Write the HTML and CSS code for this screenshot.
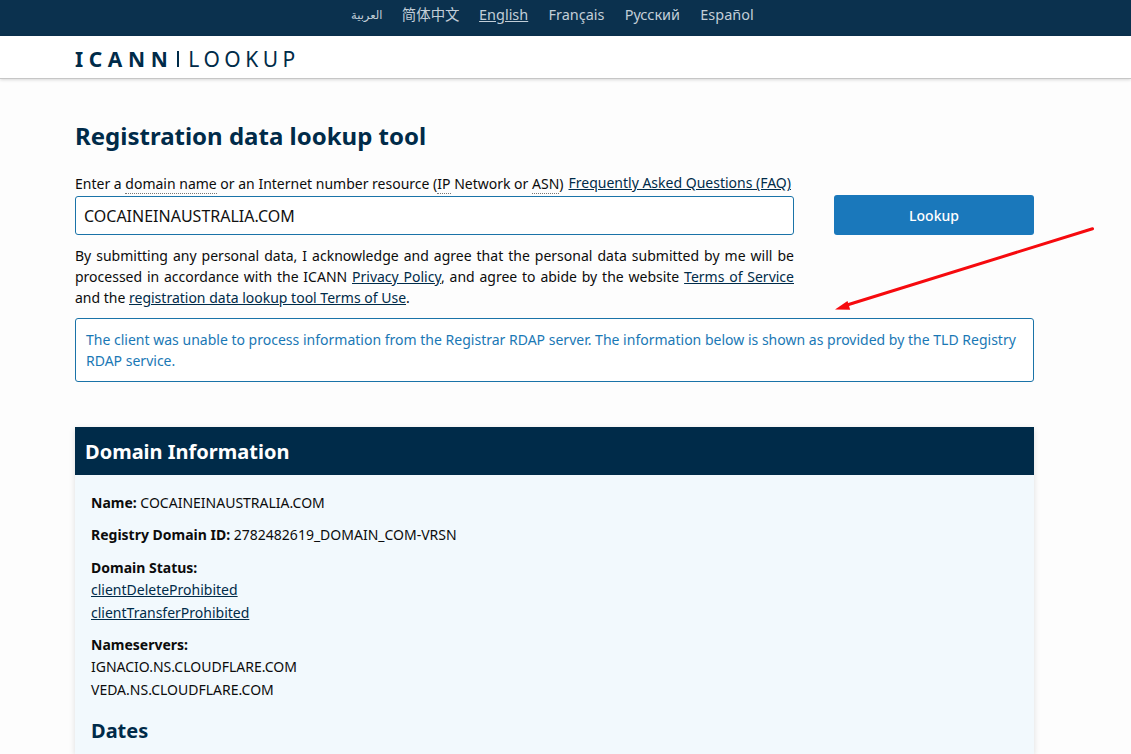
FILE: index.html
```html
<!DOCTYPE html>
<html lang="en">
<head>
    <meta charset="UTF-8">
    <meta name="viewport" content="width=device-width, initial-scale=1.0">
    <title>ICANN Lookup</title>
    <link rel="stylesheet" href="styles.css">
</head>
<body>
    <!-- Languages -->
    <nav class="languages">
        <a href="#" class="arabic" lang="ar">العربية</a>
        <a href="#" class="chinese" lang="zh">简体中文</a>
        <a href="#" class="active">English</a>
        <a href="#">Français</a>
        <a href="#">Русский</a>
        <a href="#">Español</a>
    </nav>

    <!-- Header -->
    <header>
        <a href="#" class="logo"><span class="logo-icann">ICANN</span><span class="logo-bar"></span><span class="logo-lookup">LOOKUP</span></a>
    </header>

    <!-- Main Content -->
    <main>
        <h1>Registration data lookup tool</h1>

        <form class="lookup-form">
            <div class="lookup-fields">
                <div class="field-label">
                    <label for="domain">Enter a <span class="hint">domain name</span> or an Internet number resource (<span class="hint">IP</span> Network or <span class="hint">ASN</span>)</label>
                    <a href="#" class="faq">Frequently Asked Questions (FAQ)</a>
                </div>
                <input type="text" id="domain" value="COCAINEINAUSTRALIA.COM">
                <p class="terms">By submitting any personal data, I acknowledge and agree that the personal data submitted by me will be processed in accordance with the ICANN <a href="#">Privacy Policy</a>, and agree to abide by the website <a href="#">Terms of Service</a> and the <a href="#">registration data lookup tool Terms of Use</a>.</p>
            </div>
            <button type="button" class="lookup-btn">Lookup</button>
        </form>

        <div class="notice">The client was unable to process information from the Registrar RDAP server. The information below is shown as provided by the TLD Registry RDAP service.</div>

        <!-- Results -->
        <section class="panel">
            <h2>Domain Information</h2>
            <div class="panel-body">
                <div class="item"><strong>Name:</strong> COCAINEINAUSTRALIA.COM</div>
                <div class="item"><strong>Registry Domain ID:</strong> 2782482619_DOMAIN_COM-VRSN</div>
                <div class="item">
                    <strong>Domain Status:</strong>
                    <ul>
                        <li><a href="#">clientDeleteProhibited</a></li>
                        <li><a href="#">clientTransferProhibited</a></li>
                    </ul>
                </div>
                <div class="item">
                    <strong>Nameservers:</strong>
                    <ul>
                        <li>IGNACIO.NS.CLOUDFLARE.COM</li>
                        <li>VEDA.NS.CLOUDFLARE.COM</li>
                    </ul>
                </div>
                <h3>Dates</h3>
            </div>
        </section>
    </main>

    <!-- Arrow pointing at the notice -->
    <svg class="arrow" width="262" height="88" viewBox="0 0 262 88">
        <line x1="12" y1="80" x2="257.500" y2="3.800" stroke="#f60a0e" stroke-width="3" stroke-linecap="round"/>
        <polygon points="0,84.500 12.500,76 15.200,84.800" fill="#f60a0e"/>
    </svg>
</body>
</html>
```

FILE: styles.css
```css
/* General Styles */
* {
    box-sizing: border-box;
}

body {
    margin: 0;
    height: 754px;
    overflow: hidden;
    font-family: 'Noto Sans', sans-serif;
    font-size: 14px;
    line-height: 21px;
    color: #0c0c0c;
    background: #fdfdfd;
}

a {
    color: #002b49;
    text-decoration: underline;
}

/* Languages */
.languages {
    height: 36px;
    padding: 4px 0 0 351px;
    display: flex;
    gap: 20.3px;
    background: #0b314e;
    font-size: 14.45px;
}

.languages a {
    color: #c2ced8;
    text-decoration: none;
    white-space: nowrap;
}

.languages .active {
    text-decoration: underline;
}

.arabic {
    width: 30.500px;
    font-family: 'Noto Sans', 'DejaVu Sans', sans-serif;
    font-size: 11.5px;
}

.chinese {
    width: 57px;
    font-family: 'Noto Sans', 'Noto Sans CJK SC', sans-serif;
}

/* Header */
header {
    height: 43px;
    padding: 0 75px;
    display: flex;
    align-items: center;
    background: white;
    border-bottom: 1px solid #c6c6c6;
    box-shadow: 0 1px 3px rgba(0, 0, 0, 0.15);
}

.logo {
    display: flex;
    align-items: center;
    margin-top: 4px;
    font-size: 21px;
    line-height: 30px;
    text-decoration: none;
}

.logo-icann {
    font-weight: 700;
    letter-spacing: 5.6px;
}

.logo-bar {
    width: 2px;
    height: 16px;
    margin: 0 9px 0 4px;
    background: #002b49;
}

.logo-lookup {
    letter-spacing: 4.5px;
}

/* Main Content */
main {
    width: 959px;
    margin-left: 75px;
    padding-top: 40px;
}

h1 {
    margin: 0 0 19px;
    font-size: 24px;
    line-height: 34px;
    color: #002b49;
}

.lookup-form {
    display: flex;
    justify-content: space-between;
}

.lookup-fields {
    width: 719px;
}

.field-label {
    height: 24px;
    display: flex;
    gap: 5px;
    white-space: nowrap;
}

.field-label label {
    padding-top: 1px;
}

.hint {
    border-bottom: 1px dotted #777;
}

#domain {
    display: block;
    width: 100%;
    height: 39px;
    padding: 0 8px;
    border: 1px solid #1a73a8;
    border-radius: 3px;
    background: white;
    color: #111;
    font-family: inherit;
    font-size: 16px;
}

.terms {
    margin: 10px 0;
    text-align: justify;
}

.lookup-btn {
    width: 200px;
    height: 40px;
    margin-top: 23px;
    border: none;
    border-radius: 3px;
    background: #1a78bb;
    color: white;
    font-family: inherit;
    font-size: 14px;
    font-weight: 500;
}

.notice {
    height: 64px;
    padding: 10px;
    border: 1px solid #1a73a8;
    border-radius: 3px;
    background: white;
    color: #1a78b5;
    font-size: 14.02px;
}

/* Results */
.panel {
    margin-top: 45px;
    background: #f2f9fd;
    box-shadow: 0 2px 6px rgba(0, 0, 0, 0.13);
}

.panel h2 {
    height: 48px;
    margin: 0;
    padding: 0 10px;
    background: #002b49;
    color: white;
    font-size: 20px;
    line-height: 49px;
}

.panel-body {
    height: 279px;
    padding: 16.9px 16px 0;
}

.item {
    margin-bottom: 10px;
    line-height: 22.4px;
}

.item ul {
    margin: 0;
    padding: 0;
    list-style: none;
}

.panel h3 {
    margin: 15.6px 0 0;
    font-size: 20px;
    line-height: 28px;
    color: #002b49;
}

.arrow {
    position: absolute;
    left: 835px;
    top: 225px;
}
```
